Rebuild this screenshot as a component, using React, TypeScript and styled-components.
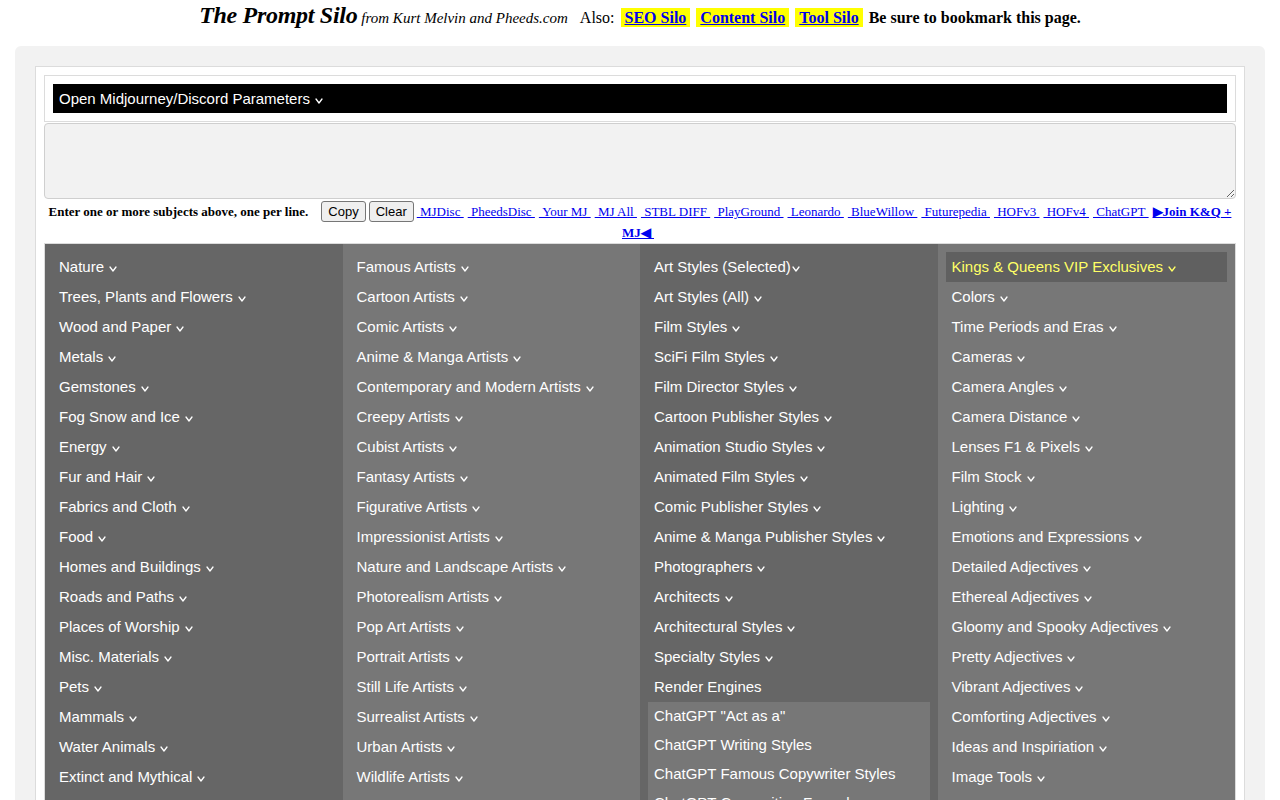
import React from "react";
import styled, { createGlobalStyle } from "styled-components";

const GlobalStyle = createGlobalStyle`
  html {
    scrollbar-width: none;
  }
  body {
    margin: 0;
    background: #fff;
    font-family: "Liberation Serif", "Times New Roman", serif;
  }
`;

interface ColumnProps {
  shade: string;
}

interface ItemProps {
  highlight?: boolean;
}

const Page = styled.div`
  padding: 0 15px 20px;
`;

const Header = styled.div`
  text-align: center;
  line-height: 30px;
  height: 30px;
  margin-bottom: 16px;
  font-size: 16px;
  white-space: nowrap;
`;

const SiteTitle = styled.span`
  font-size: 24px;
  font-weight: bold;
  font-style: italic;
  letter-spacing: -0.3px;
`;

const Byline = styled.span`
  font-size: 15px;
  font-style: italic;
  margin-right: 12px;
`;

const SiloLink = styled.a`
  background: #ffff00;
  color: #0000ee;
  font-weight: bold;
  text-decoration: underline;
  padding: 1px 4px;
  margin-left: 6px;
`;

const Bookmark = styled.b`
  margin-left: 6px;
`;

const Panel = styled.div`
  background: #f2f2f2;
  border-radius: 6px;
  padding: 20px;
`;

const Sheet = styled.div`
  background: #fff;
  border: 1px solid #dcdcdc;
  padding: 8px 8px 0;
`;

const ParamsBox = styled.div`
  border: 1px solid #dcdcdc;
  padding: 8px;
`;

const ParamsBar = styled.div`
  background: #000;
  color: #fff;
  height: 29px;
  line-height: 29px;
  padding: 0 6px;
  font-family: "Liberation Sans", Arial, sans-serif;
  font-size: 15px;
`;

const Subjects = styled.textarea`
  display: block;
  box-sizing: border-box;
  width: 100%;
  height: 76px;
  margin: 1px 0 0;
  background: #f2f2f2;
  border: 1px solid #cfcfcf;
  border-radius: 4px;
`;

const ToolLine = styled.div`
  text-align: center;
  font-size: 13px;
  line-height: 21px;
  padding: 2px 0 0;
`;

const Hint = styled.b`
  margin-right: 13px;
`;

const Button = styled.button`
  font-family: "Liberation Sans", Arial, sans-serif;
  font-size: 13px;
  height: 21px;
  padding: 0 6px;
  margin-right: 3px;
  background: #efefef;
  border: 1px solid #767676;
  border-radius: 3px;
  color: #000;
`;

const ToolLink = styled.a<{ strong?: boolean }>`
  color: #0000ee;
  text-decoration: underline;
  font-weight: ${(props) => (props.strong ? "bold" : "normal")};
  margin-right: 4px;
`;

const Grid = styled.div`
  display: grid;
  grid-template-columns: repeat(4, 1fr);
  border: 1px solid #dcdcdc;
  border-bottom: none;
`;

const Column = styled.div<ColumnProps>`
  background: ${(props) => props.shade};
  padding: 8px;
`;

const Item = styled.div<ItemProps>`
  height: 30px;
  line-height: 30px;
  padding: 0 6px;
  font-family: "Liberation Sans", Arial, sans-serif;
  font-size: 15px;
  white-space: nowrap;
  color: ${(props) => (props.highlight ? "#ffff66" : "#fff")};
  background: ${(props) => (props.highlight ? "#606060" : "transparent")};
`;

const SubList = styled.div`
  background: #777;
`;

const SubItem = styled(Item)`
  height: 29px;
  line-height: 27px;
`;

const Chevron = styled.svg<{ tight?: boolean }>`
  margin-left: ${(props) => (props.tight ? "1px" : "5px")};
  vertical-align: baseline;
`;

const Caret: React.FC<{ tight?: boolean; color?: string }> = ({ tight, color = "#fff" }) => (
  <Chevron tight={tight} width="8" height="6" viewBox="0 0 8 6">
    <polyline points="1,1 4,5 7,1" fill="none" stroke={color} strokeWidth="1.3" strokeLinecap="round" strokeLinejoin="round" />
  </Chevron>
);

const subjects = [
  "Nature",
  "Trees, Plants and Flowers",
  "Wood and Paper",
  "Metals",
  "Gemstones",
  "Fog Snow and Ice",
  "Energy",
  "Fur and Hair",
  "Fabrics and Cloth",
  "Food",
  "Homes and Buildings",
  "Roads and Paths",
  "Places of Worship",
  "Misc. Materials",
  "Pets",
  "Mammals",
  "Water Animals",
  "Extinct and Mythical",
  "Birds",
  "Insects",
];

const artists = [
  "Famous Artists",
  "Cartoon Artists",
  "Comic Artists",
  "Anime & Manga Artists",
  "Contemporary and Modern Artists",
  "Creepy Artists",
  "Cubist Artists",
  "Fantasy Artists",
  "Figurative Artists",
  "Impressionist Artists",
  "Nature and Landscape Artists",
  "Photorealism Artists",
  "Pop Art Artists",
  "Portrait Artists",
  "Still Life Artists",
  "Surrealist Artists",
  "Urban Artists",
  "Wildlife Artists",
  "Street Artists",
  "Watercolor Artists",
];

const styleList = [
  "Art Styles (All)",
  "Film Styles",
  "SciFi Film Styles",
  "Film Director Styles",
  "Cartoon Publisher Styles",
  "Animation Studio Styles",
  "Animated Film Styles",
  "Comic Publisher Styles",
  "Anime & Manga Publisher Styles",
  "Photographers",
  "Architects",
  "Architectural Styles",
  "Specialty Styles",
];

const chatgpt = [
  'ChatGPT "Act as a"',
  "ChatGPT Writing Styles",
  "ChatGPT Famous Copywriter Styles",
  "ChatGPT Copywriting Formulas",
  "ChatGPT Prompts",
];

const extras = [
  "Colors",
  "Time Periods and Eras",
  "Cameras",
  "Camera Angles",
  "Camera Distance",
  "Lenses F1 & Pixels",
  "Film Stock",
  "Lighting",
  "Emotions and Expressions",
  "Detailed Adjectives",
  "Ethereal Adjectives",
  "Gloomy and Spooky Adjectives",
  "Pretty Adjectives",
  "Vibrant Adjectives",
  "Comforting Adjectives",
  "Ideas and Inspiriation",
  "Image Tools",
  "Negative Prompts",
];

const tools = [
  "MJDisc",
  "PheedsDisc",
  "Your MJ",
  "MJ All",
  "STBL DIFF",
  "PlayGround",
  "Leonardo",
  "BlueWillow",
  "Futurepedia",
  "HOFv3",
  "HOFv4",
  "ChatGPT",
];

const nb = "\u00a0";

export default function App() {
  return (
    <Page>
      <GlobalStyle />
      <Header>
        <SiteTitle>The Prompt Silo</SiteTitle> <Byline>from Kurt Melvin and Pheeds.com</Byline>
        Also:
        <SiloLink href="#">SEO Silo</SiloLink>
        <SiloLink href="#">Content Silo</SiloLink>
        <SiloLink href="#">Tool Silo</SiloLink>
        <Bookmark>Be sure to bookmark this page.</Bookmark>
      </Header>
      <Panel>
        <Sheet>
          <ParamsBox>
            <ParamsBar>
              Open Midjourney/Discord Parameters
              <Caret />
            </ParamsBar>
          </ParamsBox>
          <Subjects />
          <ToolLine>
            <Hint>Enter one or more subjects above, one per line.</Hint>
            <Button>Copy</Button>
            <Button>Clear</Button>
            {tools.map((t) => (
              <ToolLink key={t} href="#">
                {nb + t + nb}
              </ToolLink>
            ))}
            <ToolLink strong href="#">
              {"▶Join K&Q + MJ◀" + nb}
            </ToolLink>
          </ToolLine>
          <Grid>
            <Column shade="#666">
              {subjects.map((s) => (
                <Item key={s}>
                  {s}
                  <Caret />
                </Item>
              ))}
            </Column>
            <Column shade="#777">
              {artists.map((s) => (
                <Item key={s}>
                  {s}
                  <Caret />
                </Item>
              ))}
            </Column>
            <Column shade="#666">
              <Item>
                Art Styles (Selected)
                <Caret tight />
              </Item>
              {styleList.map((s) => (
                <Item key={s}>
                  {s}
                  <Caret />
                </Item>
              ))}
              <Item>Render Engines</Item>
              <SubList>
                {chatgpt.map((s) => (
                  <SubItem key={s}>{s}</SubItem>
                ))}
              </SubList>
            </Column>
            <Column shade="#777">
              <Item highlight>
                Kings &amp; Queens VIP Exclusives
                <Caret color="#ffff66" />
              </Item>
              {extras.map((s) => (
                <Item key={s}>
                  {s}
                  <Caret />
                </Item>
              ))}
            </Column>
          </Grid>
        </Sheet>
      </Panel>
    </Page>
  );
}
